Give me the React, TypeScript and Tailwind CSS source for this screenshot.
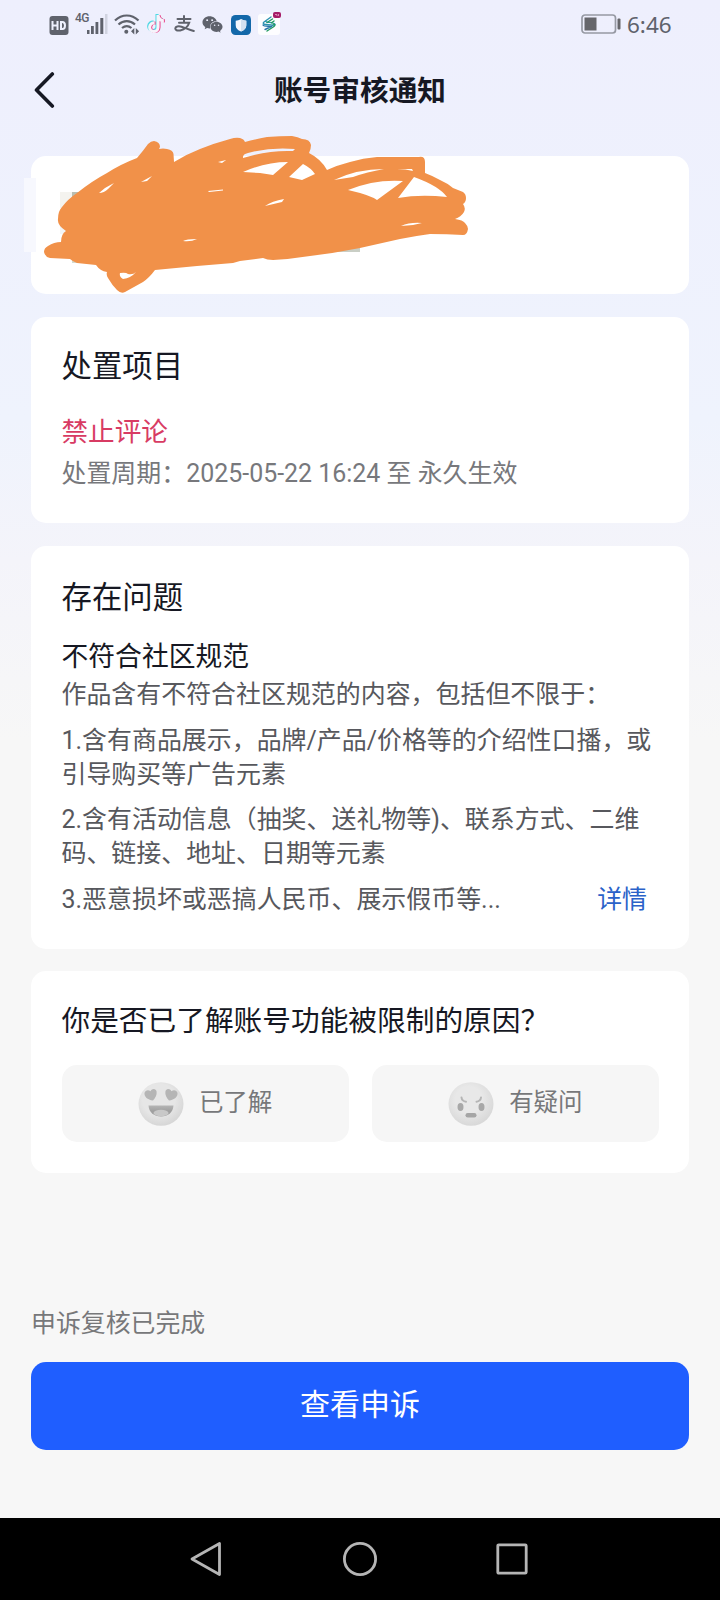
import type { ReactNode } from "react";
import { FaTiktok, FaWeixin } from "react-icons/fa6";

function StatusBar() {
  return (
    <div className="flex h-12 items-center text-[#5f626c]">
      <svg className="ml-[49px] mt-[2px]" width="20" height="19" viewBox="0 0 20 19">
        <rect x="0.5" y="0" width="19" height="19" rx="3" fill="currentColor" />
        <g stroke="#eef0fd" strokeWidth="2" fill="none">
          <path d="M3.500 5v9M8.500 5v9M3.500 9.500h5M12 6v7h1.400c1.600 0 2.600-1.200 2.600-3.500S15 6 13.400 6z" />
        </g>
      </svg>
      <span className="-mt-[12px] ml-[6px] w-[13px] font-['Roboto'] text-[12px] font-medium leading-none tracking-tighter">4G</span>
      <svg className="-ml-[1px]" width="22" height="21" viewBox="0 0 22 21">
        <g fill="currentColor">
          <rect x="0" y="16" width="2.500" height="4" />
          <rect x="4" y="12" width="2.800" height="8" />
          <rect x="8.500" y="8" width="2.800" height="12" />
          <rect x="13.300" y="4" width="3" height="16" />
          <rect x="18" y="0" width="2.500" height="20" opacity="0.2" />
        </g>
      </svg>
      <svg className="ml-[5px]" width="26" height="22" viewBox="0 0 26 22">
        <g fill="none" stroke="currentColor" strokeWidth="2.200">
          <path d="M1 7.500C8 .8 17.500.8 24.500 7.500" />
          <path d="M4.500 11.500c5-4.600 11.500-4.600 16.500 0" />
          <path d="M8 15c3-2.500 6.500-2.500 9.500 0" />
        </g>
        <circle cx="12.300" cy="18.800" r="2" fill="currentColor" />
        <path d="M20.300 15v6.500L17 18.200zM21.800 15v6.500l3.300-3.300z" fill="currentColor" />
      </svg>
      <div className="relative ml-[7px] h-[20px] w-[17px]">
        <FaTiktok className="absolute -left-[1px] top-0 text-[#4fd8e4]" size={18} />
        <FaTiktok className="absolute left-[1px] top-[1px] text-[#e8468b]" size={18} />
        <FaTiktok className="absolute left-0 top-[0.5px] text-[#f6f3fb]" size={18} />
      </div>
      <svg className="ml-[10px]" width="21" height="18" viewBox="0 0 21 18">
        <g fill="none" stroke="currentColor" strokeWidth="2" strokeLinecap="round">
          <path d="M3.500 4h13M10 1v6.500M5 7.800h10.200c-1.300 4.200-4.700 6.700-9 7.600-3 .6-5-.4-4.900-2 .1-1.900 3-2.700 6.200-1.700 4 1.300 8 3.300 12.300 4.300" />
        </g>
      </svg>
      <FaWeixin className="ml-[7px]" size={21} />
      <svg className="ml-[8px] mt-[2px]" width="20" height="20" viewBox="0 0 20 20">
        <rect width="20" height="20" rx="4.500" fill="#1368a9" />
        <path d="M10 4c2 1.300 3.500 1.500 5.300 1.700v4.500c0 3.200-2 5-5.300 6.300-3.300-1.300-5.300-3.100-5.300-6.300V5.700C6.500 5.500 8 5.300 10 4z" fill="#f2f7fd" />
        <path d="M10 4c2 1.300 3.500 1.500 5.300 1.700v4.500c0 3.200-2 5-5.300 6.300z" fill="#d3e1f0" />
      </svg>
      <svg className="-mt-[1px] ml-[7px]" width="23" height="23" viewBox="0 0 23 23">
        <rect y="2" width="22" height="21" rx="3" fill="#fdfdff" />
        <g fill="none" strokeWidth="1.400" strokeLinecap="round" strokeLinejoin="round">
          <path d="m13 5-7 5c-1.500 1.300-.5 2.500 1.500 2.500 4 0 7 .2 8 1.500M8 9.500c0 1.500 8 .2 9 3" stroke="#2b93b0" />
          <path d="m9 19 7-4.500c1.600-1.200.8-2.300-1-2.500M14.500 7 9 10.500" stroke="#249b62" />
          <path d="M5 13c1 1.800 6 1 8.500 1.500L7 17.500" stroke="#2776a8" />
          <path d="m16 9-2.500 1.800" stroke="#249b62" />
        </g>
        <rect x="15" y="0" width="8" height="6" rx="2" fill="#a61c68" />
        <path d="M17 2.500h2v1.500M20.500 2v2" stroke="#e7a8c8" strokeWidth=".8" fill="none" />
      </svg>
      <svg className="ml-auto" width="40" height="20" viewBox="0 0 40 20">
        <rect x="1" y="1" width="33.500" height="18" rx="3" fill="none" stroke="#9699a3" strokeWidth="1.700" />
        <rect x="3.500" y="3.500" width="12" height="13" fill="#66666b" />
        <rect x="36.500" y="4.500" width="3" height="11" rx="1" fill="#66666b" />
      </svg>
      <span className="mt-[2px] ml-[6px] mr-[49px] w-[44px] font-['Noto_Sans'] text-[22.500px] leading-none">6:46</span>
    </div>
  );
}

function Scribble() {
  return (
    <svg className="absolute -left-[31px] -top-[36px]" width="480" height="190" viewBox="0 120 480 190">
      <rect x="24" y="178" width="12" height="74" fill="#f7f8fe" />
      <rect x="60" y="192" width="12" height="16" fill="#f4f3ef" />
      <rect x="72" y="192" width="14" height="12" fill="#b9beb2" />
      <rect x="60" y="220" width="12" height="14" fill="#f3f5f6" />
      <rect x="72" y="255" width="12" height="8" fill="#d5d9cc" />
      <rect x="336" y="240" width="24" height="12" fill="#c9cec5" />
      <path
        fill="#f19149"
        fillRule="evenodd"
        d="M44 252Q44 248 48 246Q54 242 61 242Q61 234 66 231Q57 225 58 219Q58 211 62 207Q68 199 77 193Q92 181 107 173Q121 164 137 158Q143 151 148 144Q151 141 154 141Q160 142 160 147L159 149Q163 148 167 149Q173 150 173.500 154L174 162Q187 154 200 149Q215 143 230 139Q236 137 240 138Q244 139 245 142Q256 139 267 137Q280 136 292 136Q298 137 302 139Q310 139 311 145Q311 149 309 153Q321 159 327 170Q338 165 350 162Q363 158 377 157H419Q425 156 425 162V173Q433 176 440 180Q447 183 453 188L463 192Q466 194 466 198Q466 202 463 204Q466 208 464 212Q461 217 455 219Q463 220 465 223Q468 226 468 229Q467 235 463 235Q447 234 430 234Q415 236 400 239L360 248Q335 253 310 256Q291 259 273 260Q267 260 263 258L240 261L233 263L197 266L155 270Q149 278 143 282L125 292Q121 294 117 290Q112 285 108 278Q106 275 107 272Q100 271 96 265L77 263Q72 261 70 259L50 258Q45 257 44 252Z
        M120 273Q126 272 128 274Q133 275 136 272Q131 278 123 279Q119 277 120 273Z
        M99 193L105 188L114 183L108 189Q104 193 99 193Z
        M141 182L152 176L147 181Z
        M218 162L226 160L222 163Z
        M208 191L223 189.500V190.500L209 192Z
        M183 241Q186 239 197 239Q191 242 183 241Z
        M243 157Q243 154 248 153Q270 147 295 149L293 151Q268 150 243 158Z
        M243 172Q265 162 288 162L273 175L260 173Z
        M303 164Q311 168 315 174L302 180L289 177Z
        M334 180Q357 169 384 169Q367 172 353 177Z
        M348 190Q375 179 403 181L377 200Q370 195 348 190Z
        M397 169H412L413 171Q406 169 397 169Z
        M414 177Q439 186 447 197Q420 194 398 198Z
        M265 206Q272 201 284 199L282 202Z
        M401 226Q410 222 422 223L413 225Z"
      />
    </svg>
  );
}

function Card({ className, children }: { className: string; children?: ReactNode }) {
  return <section className={`mx-[31px] rounded-[15px] bg-white pl-[30.500px] pr-[31px] ${className}`}>{children}</section>;
}

function LoveFace() {
  return (
    <svg width="46" height="44" viewBox="0 0 46 44">
      <defs>
        <radialGradient id="loveFace" cx=".45" cy=".4" r=".6">
          <stop offset=".6" stopColor="#e6e6e6" />
          <stop offset="1" stopColor="#d6d6d6" />
        </radialGradient>
        <linearGradient id="loveMouth" x1="0" y1="0" x2="0" y2="1">
          <stop offset="0" stopColor="#b5b5b5" />
          <stop offset=".5" stopColor="#a0a0a0" />
        </linearGradient>
      </defs>
      <ellipse cx="23" cy="22" rx="22.500" ry="21.800" fill="url(#loveFace)" />
      <g fill="#b5b5b5">
        <path d="M15 18.500C9.500 18 6 14.500 6.500 11c.8-3 4-3.700 6-1.700C14 6 18 6.200 18.600 9.500c.5 3.200-1.200 6.500-3.600 9z" />
        <path d="M31 18.500c-2.400-2.500-4.100-5.800-3.600-9C28 6.200 32 6 33.500 9.300c2-2 5.200-1.300 6 1.700.5 3.500-3 7-8.500 7.500z" />
      </g>
      <path d="M10.500 23.500h25c-.5 7-5.500 11-12.500 11s-12-4-12.500-11z" fill="url(#loveMouth)" />
      <ellipse cx="23" cy="31" rx="7.500" ry="3.200" fill="#c8c8c8" />
    </svg>
  );
}

function AngryFace() {
  return (
    <svg width="46" height="44" viewBox="0 0 46 44">
      <defs>
        <radialGradient id="angryFace" cx=".45" cy=".4" r=".6">
          <stop offset=".5" stopColor="#e8e8e8" />
          <stop offset="1" stopColor="#d8d8d8" />
        </radialGradient>
      </defs>
      <ellipse cx="23" cy="22" rx="22.500" ry="21.800" fill="url(#angryFace)" />
      <path d="M13.500 15.500c.3 2.500 2 4 4.500 4.200M33 15.500c-.3 2.500-2 4-4.500 4.200" fill="none" stroke="#b5b5b5" strokeWidth="2" strokeLinecap="round" />
      <ellipse cx="12.500" cy="25" rx="3" ry="4" fill="#a8a8a8" />
      <ellipse cx="33.500" cy="25" rx="3" ry="4" fill="#a8a8a8" />
      <rect x="17.500" y="31" width="11" height="4.500" rx="2.200" fill="#a5a5a5" />
    </svg>
  );
}

function Choice({ icon, label }: { icon: ReactNode; label: string }) {
  return (
    <button className="flex h-[77px] flex-1 items-center justify-center gap-[15px] rounded-[15px] bg-[#f6f6f6] text-[24.500px] text-[#77787a]">
      {icon}
      <span className="leading-none">{label}</span>
    </button>
  );
}

export default function App() {
  return (
    <main className="flex h-[1600px] w-[720px] flex-col overflow-hidden bg-[#f7f7f7] bg-[linear-gradient(180deg,#eeeffd_0px,#eff3fd_420px,#f4f4fa_560px,#f7f7f7_740px)] font-['Roboto','Noto_Sans_CJK_SC',sans-serif] text-[#161823]">
      <StatusBar />
      <header className="grid h-[84px] grid-cols-[1fr_auto_1fr] items-center">
        <svg className="ml-[34px]" width="22" height="36" viewBox="0 0 22 36">
          <path d="M18.300 2 2.500 18l15.800 16" fill="none" stroke="#161823" strokeWidth="3.600" strokeLinecap="round" strokeLinejoin="round" />
        </svg>
        <h1 className="mt-[2px] text-[28.700px] font-bold leading-none">账号审核通知</h1>
      </header>

      <Card className="relative mt-6 h-[138px] shrink-0">
        <Scribble />
      </Card>

      <Card className="mt-[23px] h-[206px] shrink-0 pt-[30px]">
        <h2 className="text-[30.400px] leading-[40px]">处置项目</h2>
        <p className="mt-[27px] text-[26.600px] leading-[36px] text-[#d83b63]">禁止评论</p>
        <p className="mt-[6px] text-[24.950px] leading-[36px] text-[#77787c]">处置周期：2025-05-22 16:24 至 永久生效</p>
      </Card>

      <Card className="mt-[23px] h-[403px] shrink-0 pt-[32px] text-[24.950px] leading-[34px] text-[#57585d]">
        <h2 className="text-[30.400px] leading-[40px] text-[#161823]">存在问题</h2>
        <h3 className="mt-[21px] text-[26.800px] leading-[36px] text-[#161823]">不符合社区规范</h3>
        <p className="mt-[3px]">作品含有不符合社区规范的内容，包括但不限于：</p>
        <p className="mt-[12px]">
          1.含有商品展示，品牌/产品/价格等的介绍性口播，或
          <br />
          引导购买等广告元素
        </p>
        <p className="mt-[11px]">
          2.含有活动信息（抽奖、送礼物等)、联系方式、二维
          <br />
          码、链接、地址、日期等元素
        </p>
        <p className="mt-[12px] flex justify-between pr-[11px]">
          <span>3.恶意损坏或恶搞人民币、展示假币等...</span>
          <a className="text-[#2a62c9]">详情</a>
        </p>
      </Card>

      <Card className="mt-[22px] h-[202px] shrink-0 pt-[31px]">
        <h2 className="text-[28.700px] leading-[38px]">你是否已了解账号功能被限制的原因？</h2>
        <div className="-mr-[1px] mt-[25px] flex gap-[23px]">
          <Choice icon={<LoveFace />} label="已了解" />
          <Choice icon={<AngryFace />} label="有疑问" />
        </div>
      </Card>

      <footer className="mt-auto flex flex-col px-[31px] pb-[68px]">
        <p className="text-[24.900px] leading-[34px] text-[#77787a]">申诉复核已完成</p>
        <button className="mt-[21px] h-[88px] rounded-[15px] bg-[#1f5eff] pb-[3px] text-[30px] text-white">查看申诉</button>
      </footer>

      <nav className="flex h-[82px] shrink-0 items-center bg-black">
        <svg className="ml-[189px]" width="34" height="38" viewBox="0 0 34 38">
          <path d="M30.500 3.500v31L3 19z" fill="none" stroke="#b5b5b5" strokeWidth="2.800" strokeLinejoin="round" />
        </svg>
        <svg className="ml-[119px]" width="36" height="36" viewBox="0 0 36 36">
          <circle cx="18" cy="18" r="15.600" fill="none" stroke="#b5b5b5" strokeWidth="2.800" />
        </svg>
        <svg className="ml-[118px]" width="32" height="32" viewBox="0 0 32 32">
          <rect x="1.800" y="1.800" width="28.400" height="28.400" rx="1" fill="none" stroke="#b5b5b5" strokeWidth="2.800" />
        </svg>
      </nav>
    </main>
  );
}
